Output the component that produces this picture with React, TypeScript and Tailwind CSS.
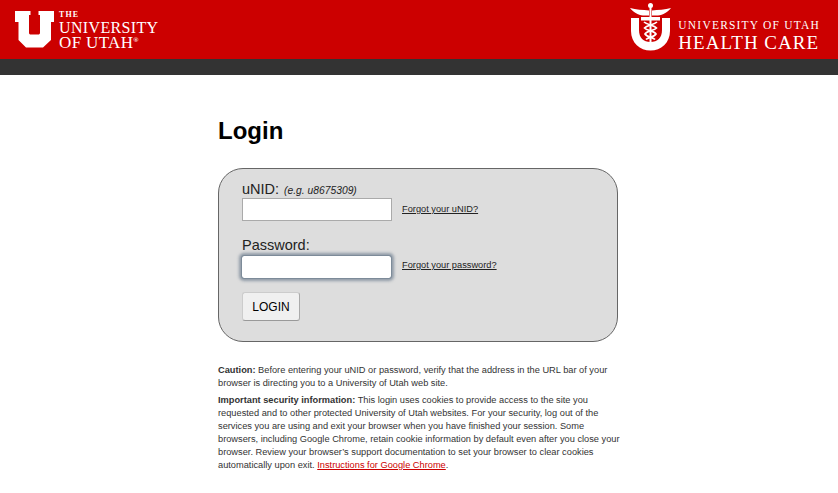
export default function App() {
  return (
    <div className="min-h-[493px] bg-white font-['Liberation_Sans',Arial,sans-serif] overflow-hidden">
      <header className="h-[59px] bg-[#cc0000] flex justify-between text-white">
        <div className="flex ml-[15px] mt-[11px] h-[37px]">
          <svg width="39" height="37" viewBox="0 0 39 37" className="shrink-0">
            <path fill="#fff" d="M0 0H15.5V4H14V21.5C14 23 14.5 23.5 16 23.5H23C24.5 23.5 25 23 25 21.5V4H23.5V0H39V11H36V29L28 36.5H11L3.5 29V11H0Z" />
          </svg>
          <div className="ml-[5px] font-['Liberation_Serif',serif] leading-none -mt-[1px]">
            <div className="text-[8px] font-bold tracking-[1.1px] h-[10px] leading-[10px]">THE</div>
            <div className="text-[16px] tracking-[0.35px] h-[15px] leading-[15px] whitespace-nowrap">UNIVERSITY</div>
            <div className="text-[17px] tracking-[0.35px] h-[15px] leading-[15px] flex whitespace-nowrap">OF UTAH<span className="text-[7px] leading-[10px] font-bold tracking-normal">®</span></div>
          </div>
        </div>
        <div className="flex mr-[18px] mt-[2px]">
          <svg width="41" height="49" viewBox="0 0 41 49" className="shrink-0">
            <circle cx="20.5" cy="3.5" r="2.5" fill="#fff" />
            <path fill="#fff" d="M0 6C6 7.5 13 8 19 8.5V13.5H13C8 13 3 10 0 6ZM41 6C35 7.5 28 8 22 8.5V13.5H28C33 13 38 10 41 6Z" />
            <path fill="#fff" d="M1 16H9V28C9 36 13.5 40 20.5 40C27.5 40 32 36 32 28V16H40V29C40 41 31 48.5 20.5 48.5C10 48.5 1 41 1 29Z" />
            <rect x="11" y="15" width="19" height="3.5" fill="#fff" />
            <rect x="19.5" y="5" width="2" height="35" fill="#fff" />
            <path fill="none" stroke="#fff" strokeWidth="1.7" d="M14 20C17 23 24 23 26.5 26C24 29 17 28.5 15 32C17 35.5 23 35 25 37.5M27 20C24 23 17 23 14.5 26C17 29 24 28.5 26 32C24 35.5 18 35 16 37.5" />
          </svg>
          <div className="ml-[7px] font-['Liberation_Serif',serif] mt-[16px]">
            <div className="text-[11.5px] tracking-[1.2px] h-[14px] leading-[14px] whitespace-nowrap">UNIVERSITY OF UTAH</div>
            <div className="text-[19px] tracking-[1px] h-[19px] leading-[19px] mt-[1px] whitespace-nowrap">HEALTH CARE</div>
          </div>
        </div>
      </header>
      <div className="h-4 bg-[#333333]" />
      <main className="ml-[218px] w-[400px]">
        <h1 className="text-[24px] leading-[28px] font-bold text-black mt-[42px]">Login</h1>
        <form className="mt-[23px] h-[174px] rounded-[25px] border border-[#666666] bg-[#dddddd] pl-[23px] pt-[13px]">
          <div className="text-[14.5px] leading-[14px] text-[#222222]">
            uNID: <em className="text-[10.3px] ml-[1px]">(e.g. u8675309)</em>
          </div>
          <div className="flex items-center">
            <div className="w-[150px] h-[23px] bg-white border border-[#aaaaaa]" />
            <a className="ml-[10px] text-[9.25px] leading-[11px] underline text-[#222222]">Forgot your uNID?</a>
          </div>
          <div className="text-[14.5px] leading-[14px] text-[#222222] mt-[17px]">Password:</div>
          <div className="flex items-center mt-[4px]">
            <div className="w-[149px] h-[22px] bg-white rounded-[2px] outline outline-[#7d8b99] shadow-[0_0_3px_3px_rgba(93,112,131,0.6)]" />
            <a className="ml-[11px] mb-[3px] text-[9.25px] leading-[11px] underline text-[#222222]">Forgot your password?</a>
          </div>
          <button type="button" className="block mt-[14px] w-[58px] h-[29px] rounded-[3px] bg-[#f0f0f0] border border-[#cccccc] border-b-[#999999] border-r-[#aaaaaa] text-[12px] text-black">LOGIN</button>
        </form>
        <div className="mt-[22px] text-[9.25px] leading-[13px] text-[#333333] whitespace-nowrap">
          <p><b>Caution:</b> Before entering your uNID or password, verify that the address in the URL bar of your<br />browser is directing you to a University of Utah web site.</p>
          <p className="mt-[4px]"><b>Important security information:</b> This login uses cookies to provide access to the site you<br />requested and to other protected University of Utah websites. For your security, log out of the<br />services you are using and exit your browser when you have finished your session. Some<br />browsers, including Google Chrome, retain cookie information by default even after you close your<br />browser. Review your browser’s support documentation to set your browser to clear cookies<br />automatically upon exit. <a className="text-[#cc0000] underline">Instructions for Google Chrome</a>.</p>
        </div>
      </main>
    </div>
  );
}
